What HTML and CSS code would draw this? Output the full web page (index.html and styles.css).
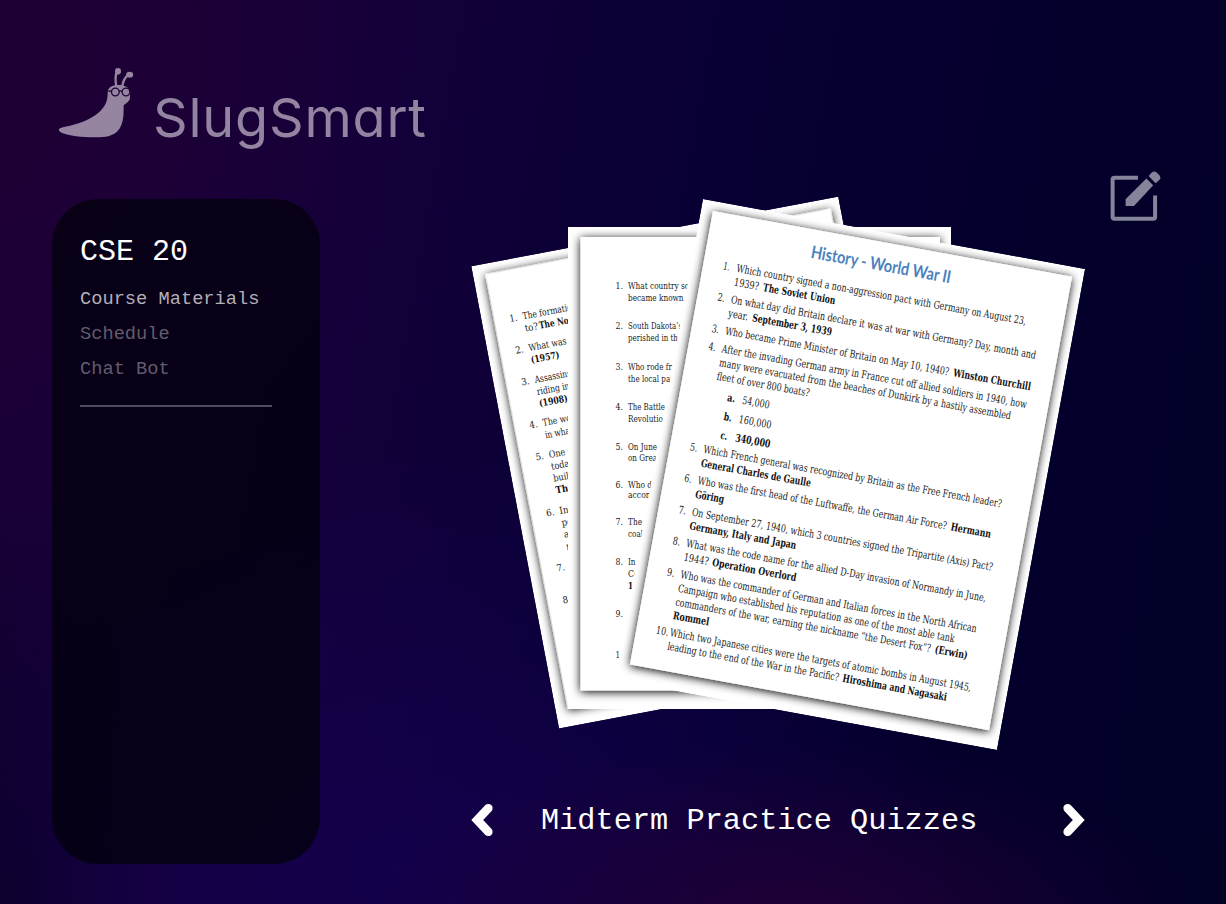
FILE: index.html
```html
<!DOCTYPE html>
<html lang="en">
<head>
<meta charset="utf-8">
<title>SlugSmart</title>
<link rel="stylesheet" href="styles.css">
</head>
<body>
<div class="app">
  <header class="brand">
    <svg class="slug" viewBox="0 0 225 210" aria-hidden="true">
      <path class="slug-fill" d="M0 141 C-1 136 5 135 12 133 C70 121 104 104 124 84 C140 68 146 54 146 30 C146 14 158 6 178 6 C196 6 211 14 213 26 C215 32 212 38 213 43 C213 56 202 60 194 67 C194 96 194 118 181 138 C165 160 140 163 108 163 C70 163 28 158 8 149 C2 146 0 144 0 141Z"/>
      <path class="slug-stalk" d="M172 12 C169 -6 168 -20 173 -33 M189 12 C192 -6 199 -19 209 -25"/>
      <ellipse class="slug-fill" cx="177" cy="-35" rx="9" ry="10"/>
      <ellipse class="slug-fill" cx="212" cy="-25" rx="10.5" ry="8.5"/>
      <circle class="slug-glass" cx="169" cy="27" r="11.5"/>
      <circle class="slug-glass" cx="201" cy="27" r="11.5"/>
      <path class="slug-glass" d="M148 24 L158 25 M180 25 Q185 22 190 25"/>
    </svg>
    <span class="brand-name">SlugSmart</span>
  </header>

  <div class="content">
    <aside class="panel">
      <h1 class="course">CSE 20</h1>
      <nav class="menu">
        <a class="item active">Course Materials</a>
        <a class="item">Schedule</a>
        <a class="item">Chat Bot</a>
      </nav>
      <hr class="rule">
    </aside>

    <main class="viewer">
      <svg class="papers" viewBox="471 197 614 553" role="img" aria-label="Practice quiz sheets">
        <defs>
          <filter id="lift" x="-10%" y="-10%" width="120%" height="120%">
            <feDropShadow dx="0" dy="1.5" stdDeviation="4.6" flood-color="#000" flood-opacity="1"/>
          </filter>
          <clipPath id="c1"><rect width="373.5" height="470.5"/></clipPath>
          <clipPath id="c2"><rect x="568" y="227" width="383" height="482"/></clipPath>
          <clipPath id="c3"><rect width="388.4" height="489"/></clipPath>
        </defs>

        <g transform="translate(471.3 266.3) rotate(-10.75)" clip-path="url(#c1)" class="back">
          <rect class="sheet" width="373.5" height="470.5"/>
          <rect class="sheet" x="12.5" y="10.5" width="351" height="442.5" filter="url(#lift)"/>
          <text x="27.5" y="62">1.</text><text x="41" y="62" textLength="50" lengthAdjust="spacingAndGlyphs">The formatio</text>
          <text x="41" y="74.2">to?</text><text class="b" x="55.5" y="74.2" textLength="34" lengthAdjust="spacingAndGlyphs">The Nor</text>
          <text x="27.5" y="94.2">2.</text><text x="41" y="94.2" textLength="44" lengthAdjust="spacingAndGlyphs">What was t</text>
          <text class="b" x="41" y="106.4" textLength="29" lengthAdjust="spacingAndGlyphs">(1957)</text>
          <text x="27.5" y="126.5">3.</text><text x="41" y="126.5" textLength="37" lengthAdjust="spacingAndGlyphs">Assassins</text>
          <text x="41" y="138.8" textLength="33" lengthAdjust="spacingAndGlyphs">riding in</text>
          <text class="b" x="41" y="150.8" textLength="29" lengthAdjust="spacingAndGlyphs">(1908)</text>
          <text x="27.5" y="170.4">4.</text><text x="41" y="170.4" textLength="32" lengthAdjust="spacingAndGlyphs">The wor</text>
          <text x="41" y="182.9" textLength="28" lengthAdjust="spacingAndGlyphs">in what</text>
          <text x="27.5" y="202.9">5.</text><text x="41" y="202.9" textLength="24" lengthAdjust="spacingAndGlyphs">One o</text>
          <text x="41" y="215" textLength="23" lengthAdjust="spacingAndGlyphs">today</text>
          <text x="41" y="227" textLength="21" lengthAdjust="spacingAndGlyphs">build</text>
          <text class="b" x="41" y="239" textLength="18" lengthAdjust="spacingAndGlyphs">The</text>
          <text x="27.5" y="260">6.</text><text x="41" y="260">In</text>
          <text x="41" y="272.2">po</text>
          <text x="41" y="284.2">a</text>
          <text x="41" y="296.4">n</text>
          <text x="27.5" y="316">7.</text>
          <text x="27.5" y="348.4">8.</text>
        </g>

        <g clip-path="url(#c2)" class="mid">
          <rect class="sheet" x="568" y="227" width="383" height="482"/>
          <rect class="sheet" x="580.5" y="237" width="359.5" height="453.5" filter="url(#lift)"/>
          <text x="615.5" y="289.3">1.</text><text x="628" y="289.3" textLength="61" lengthAdjust="spacingAndGlyphs">What country sc</text>
          <text x="628" y="301" textLength="55.5" lengthAdjust="spacingAndGlyphs">became known</text>
          <text x="615.5" y="329.3">2.</text><text x="628" y="329.3" textLength="54" lengthAdjust="spacingAndGlyphs">South Dakota’s</text>
          <text x="628" y="341.3" textLength="54" lengthAdjust="spacingAndGlyphs">perished in the</text>
          <text x="615.5" y="369.8">3.</text><text x="628" y="369.8" textLength="44" lengthAdjust="spacingAndGlyphs">Who rode fr</text>
          <text x="628" y="381.6" textLength="45" lengthAdjust="spacingAndGlyphs">the local pat</text>
          <text x="615.5" y="410.3">4.</text><text x="628" y="410.3" textLength="37" lengthAdjust="spacingAndGlyphs">The Battle</text>
          <text x="628" y="421.8" textLength="35" lengthAdjust="spacingAndGlyphs">Revolutio</text>
          <text x="615.5" y="450.3">5.</text><text x="628" y="450.3" textLength="29" lengthAdjust="spacingAndGlyphs">On June</text>
          <text x="628" y="461" textLength="29" lengthAdjust="spacingAndGlyphs">on Grea</text>
          <text x="615.5" y="488">6.</text><text x="628" y="488" textLength="24" lengthAdjust="spacingAndGlyphs">Who d</text>
          <text x="628" y="498.3" textLength="25" lengthAdjust="spacingAndGlyphs">accom</text>
          <text x="615.5" y="525.3">7.</text><text x="628" y="525.3" textLength="14" lengthAdjust="spacingAndGlyphs">The</text>
          <text x="628" y="536.8" textLength="15" lengthAdjust="spacingAndGlyphs">coal</text>
          <text x="615.5" y="565.3">8.</text><text x="628" y="565.3" textLength="7.5" lengthAdjust="spacingAndGlyphs">In</text>
          <text x="628" y="577">Co</text>
          <text class="b" x="628" y="588.6" textLength="5" lengthAdjust="spacingAndGlyphs">1</text>
          <text x="615.5" y="617.3">9.</text>
          <text x="615.5" y="657.8" textLength="4.5" lengthAdjust="spacingAndGlyphs">1</text>
        </g>

        <g transform="translate(703 199) rotate(10.38)" clip-path="url(#c3)" class="front">
          <rect class="sheet" width="388.4" height="489"/>
          <rect class="sheet" x="12" y="10" width="365" height="461" filter="url(#lift)"/>
          <text class="title" x="116" y="38.5" textLength="142" lengthAdjust="spacingAndGlyphs">History - World War II</text>
          <text x="32" y="65.7" textLength="6.5" lengthAdjust="spacingAndGlyphs">1.</text><text x="45.7" y="65.7" textLength="294.3" lengthAdjust="spacingAndGlyphs">Which country signed a non-aggression pact with Germany on August 23,</text>
          <text x="45.7" y="79.7" textLength="25" lengthAdjust="spacingAndGlyphs">1939?</text><text class="b" x="75.2" y="79.7" textLength="73.3" lengthAdjust="spacingAndGlyphs">The Soviet Union</text>
          <text x="32" y="97.4" textLength="7.5" lengthAdjust="spacingAndGlyphs">2.</text><text x="45.7" y="97.4" textLength="310" lengthAdjust="spacingAndGlyphs">On what day did Britain declare it was at war with Germany? Day, month and</text>
          <text x="45.7" y="111.4" textLength="20" lengthAdjust="spacingAndGlyphs">year.</text><text class="b" x="70" y="111.4" textLength="80.7" lengthAdjust="spacingAndGlyphs">September 3, 1939</text>
          <text x="32" y="129.3" textLength="7.5" lengthAdjust="spacingAndGlyphs">3.</text><text x="45.7" y="129.3" textLength="227.5" lengthAdjust="spacingAndGlyphs">Who became Prime Minister of Britain on May 10, 1940?</text><text class="b" x="277.5" y="129.3" textLength="78.7" lengthAdjust="spacingAndGlyphs">Winston Churchill</text>
          <text x="32" y="147.5" textLength="7.5" lengthAdjust="spacingAndGlyphs">4.</text><text x="45.7" y="147.5" textLength="309.8" lengthAdjust="spacingAndGlyphs">After the invading German army in France cut off allied soldiers in 1940, how</text>
          <text x="45.7" y="161.5" textLength="296.2" lengthAdjust="spacingAndGlyphs">many were evacuated from the beaches of Dunkirk by a hastily assembled</text>
          <text x="45.7" y="175.3" textLength="94" lengthAdjust="spacingAndGlyphs">fleet of over 800 boats?</text>
          <text class="b" x="59.8" y="194.3" textLength="8" lengthAdjust="spacingAndGlyphs">a.</text><text x="75" y="194.3" textLength="27.5" lengthAdjust="spacingAndGlyphs">54,000</text>
          <text class="b" x="59.8" y="213.7" textLength="8" lengthAdjust="spacingAndGlyphs">b.</text><text x="75" y="213.7" textLength="33" lengthAdjust="spacingAndGlyphs">160,000</text>
          <text class="b" x="59.8" y="232.7" textLength="7" lengthAdjust="spacingAndGlyphs">c.</text><text class="b" x="75" y="232.7" textLength="35.3" lengthAdjust="spacingAndGlyphs">340,000</text>
          <text x="32" y="249.7" textLength="7.5" lengthAdjust="spacingAndGlyphs">5.</text><text x="45.7" y="249.7" textLength="303" lengthAdjust="spacingAndGlyphs">Which French general was recognized by Britain as the Free French leader?</text>
          <text class="b" x="45.7" y="263.7" textLength="111.6" lengthAdjust="spacingAndGlyphs">General Charles de Gaulle</text>
          <text x="32" y="281.4" textLength="7.5" lengthAdjust="spacingAndGlyphs">6.</text><text x="45.7" y="281.4" textLength="253" lengthAdjust="spacingAndGlyphs">Who was the first head of the Luftwaffe, the German Air Force?</text><text class="b" x="302.8" y="281.4" textLength="40.8" lengthAdjust="spacingAndGlyphs">Hermann</text>
          <text class="b" x="45.7" y="295.4" textLength="29.3" lengthAdjust="spacingAndGlyphs">Göring</text>
          <text x="32" y="313.5" textLength="7.5" lengthAdjust="spacingAndGlyphs">7.</text><text x="45.7" y="313.5" textLength="305.7" lengthAdjust="spacingAndGlyphs">On September 27, 1940, which 3 countries signed the Tripartite (Axis) Pact?</text>
          <text class="b" x="45.7" y="327.5" textLength="108.4" lengthAdjust="spacingAndGlyphs">Germany, Italy and Japan</text>
          <text x="32" y="345.2" textLength="7.5" lengthAdjust="spacingAndGlyphs">8.</text><text x="45.7" y="345.2" textLength="304.7" lengthAdjust="spacingAndGlyphs">What was the code name for the allied D-Day invasion of Normandy in June,</text>
          <text x="45.7" y="359.2" textLength="25.3" lengthAdjust="spacingAndGlyphs">1944?</text><text class="b" x="74.8" y="359.2" textLength="85.1" lengthAdjust="spacingAndGlyphs">Operation Overlord</text>
          <text x="32" y="377" textLength="7.5" lengthAdjust="spacingAndGlyphs">9.</text><text x="45.7" y="377" textLength="301" lengthAdjust="spacingAndGlyphs">Who was the commander of German and Italian forces in the North African</text>
          <text x="45.7" y="390.8" textLength="281" lengthAdjust="spacingAndGlyphs">Campaign who established his reputation as one of the most able tank</text>
          <text x="45.7" y="404.8" textLength="259.3" lengthAdjust="spacingAndGlyphs">commanders of the war, earning the nickname “the Desert Fox”?</text><text class="b" x="309.3" y="404.8" textLength="33.3" lengthAdjust="spacingAndGlyphs">(Erwin)</text>
          <text class="b" x="45.7" y="418.6" textLength="36.5" lengthAdjust="spacingAndGlyphs">Rommel</text>
          <text x="31.7" y="436" textLength="12.5" lengthAdjust="spacingAndGlyphs">10.</text><text x="45.7" y="436" textLength="306.2" lengthAdjust="spacingAndGlyphs">Which two Japanese cities were the targets of atomic bombs in August 1945,</text>
          <text x="45.7" y="449.8" textLength="174.3" lengthAdjust="spacingAndGlyphs">leading to the end of the War in the Pacific?</text><text class="b" x="223.8" y="449.8" textLength="105.7" lengthAdjust="spacingAndGlyphs">Hiroshima and Nagasaki</text>
        </g>
      </svg>

      <div class="pager">
        <svg class="arrow" viewBox="0 0 22 34" aria-label="Previous"><path d="M17.3 5.2 L6.2 17 L17.3 28.8"/></svg>
        <h2 class="deck">Midterm Practice Quizzes</h2>
        <svg class="arrow" viewBox="0 0 22 34" aria-label="Next"><path d="M4.7 5.2 L15.8 17 L4.7 28.8"/></svg>
      </div>
    </main>

    <svg class="edit" viewBox="0 0 52 52" aria-label="Edit">
      <path class="edit-box" d="M28 7.7 H4.5 Q2.6 7.7 2.6 9.6 V46.8 Q2.6 48.7 4.5 48.7 H43.2 Q45.1 48.7 45.1 46.8 V25.5"/>
      <path class="edit-pen" d="M15.6 36 V29.2 L36.4 8.4 L43.2 15.2 L24 36Z M38.6 6 L41.8 2.6 Q44.2 0.4 46.6 2.6 L49.6 5.6 Q51.2 7.6 49.6 9.8 L45.6 13.2Z"/>
    </svg>
  </div>
</div>
</body>
</html>
```
FILE: styles.css
```css
* { box-sizing: border-box; }

body {
  margin: 0;
  color: #fff;
  font-family: "Liberation Mono", monospace;
}

.app {
  width: 1226px;
  height: 904px;
  overflow: hidden;
  padding: 67px 62px 40px 52px;
  background:
    radial-gradient(ellipse 420px 190px at 790px 930px, rgba(34, 0, 54, .95), rgba(34, 0, 54, 0)),
    radial-gradient(ellipse 560px 420px at 400px 870px, rgba(20, 0, 78, .9), rgba(20, 0, 78, 0)),
    radial-gradient(ellipse 420px 480px at 0 60px, rgba(32, 0, 52, .95), rgba(32, 0, 52, 0)),
    radial-gradient(ellipse 160px 400px at 0 904px, rgba(8, 0, 32, .9), rgba(8, 0, 32, 0)),
    linear-gradient(100deg, #1a0038 0%, #14003a 28%, #080034 54%, #03002c 78%, #010025 100%);
}

.brand {
  display: flex;
  height: 132px;
  padding-left: 7px;
}

.slug {
  width: 75px;
  height: 70px;
  margin-top: 16px;
  overflow: visible;
}
.slug-fill { fill: #9585a0; }
.slug-stalk { fill: none; stroke: #9585a0; stroke-width: 7; stroke-linecap: round; }
.slug-glass { fill: none; stroke: #1f0638; stroke-width: 4; }

.brand-name {
  margin: 18px 0 0 19px;
  color: #9385a1;
  font-family: Inter, sans-serif;
  font-feature-settings: "cv11";
  font-size: 54px;
  font-weight: 400;
  line-height: 66px;
  letter-spacing: .8px;
}

.content { display: flex; align-items: flex-start; }

.panel {
  width: 268px;
  height: 665px;
  padding: 33px 27px 32px 28px;
  border-radius: 46px;
  background: rgba(3, 0, 12, .76);
}

.course {
  margin: 0;
  font-size: 30px;
  font-weight: 400;
  line-height: 40px;
}

.menu { display: flex; flex-direction: column; padding-top: 10px; }
.item { color: #625c6d; font-size: 18.7px; line-height: 35px; white-space: nowrap; }
.item.active { color: #b3b0b8; }

.rule {
  width: 192px;
  height: 2px;
  margin: 18px 0 0;
  border: 0;
  background: #534c60;
}

.viewer { width: 614px; margin: -2px 0 0 151px; }

.papers { display: block; width: 614px; height: 553px; }
.papers text { fill: #222; font-family: "DejaVu Serif Condensed", "DejaVu Serif", serif; font-stretch: condensed; }
.papers .b { font-weight: 700; fill: #111; }
.sheet { fill: #fff; }
.back text { font-size: 9.6px; }
.mid text { font-size: 8.7px; }
.front text { font-size: 10.8px; }
.front .title {
  fill: #4a82bd;
  font-family: Lato, sans-serif;
  font-size: 17.5px;
  font-weight: 700;
  font-stretch: normal;
}

.pager {
  display: flex;
  align-items: center;
  padding-top: 49px;
}
.deck {
  flex: 1;
  margin: 2px 0 0 48px;
  font-size: 30.3px;
  font-weight: 400;
  line-height: 40px;
  white-space: nowrap;
}
.arrow { flex: none; width: 22px; height: 34px; overflow: visible; }
.arrow path { fill: none; stroke: #fff; stroke-width: 8.6; stroke-linecap: round; }

.edit { width: 52px; height: 52px; margin: -29px 0 0 25px; overflow: visible; }
.edit-box { fill: none; stroke: #84849b; stroke-width: 4; }
.edit-pen { fill: #84849b; }
```
